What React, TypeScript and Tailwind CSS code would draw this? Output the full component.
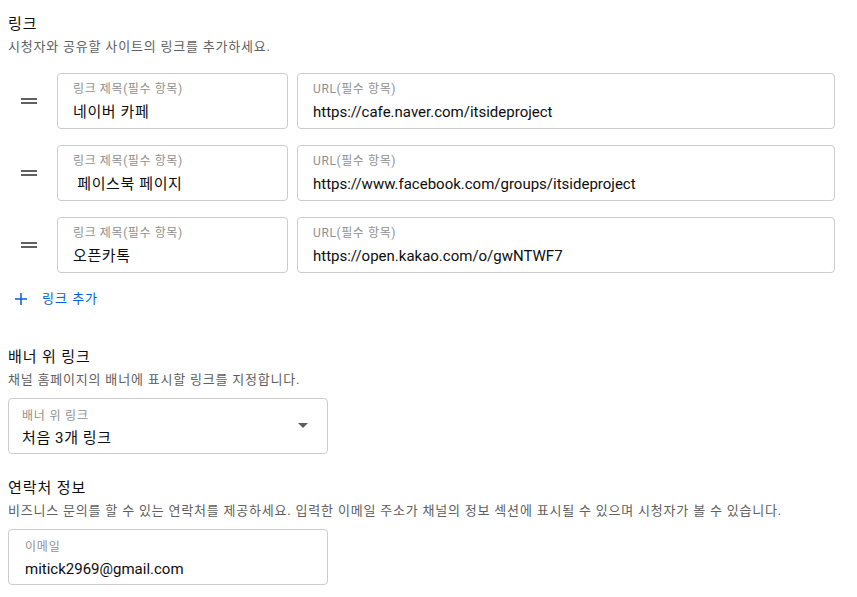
import React from 'react';

const FONT = "font-['Roboto','Noto_Sans_CJK_KR',sans-serif]";

const links = [
  { title: '네이버 카페', url: 'https://cafe.naver.com/itsideproject' },
  { title: ' 페이스북 페이지', url: 'https://www.facebook.com/groups/itsideproject' },
  { title: '오픈카톡', url: 'https://open.kakao.com/o/gwNTWF7' },
];

const DragHandle = () => (
  <svg width="24" height="24" viewBox="0 0 24 24" className="text-[#606060]">
    <path d="M20 9H4v2h16V9zM4 15h16v-2H4v2z" fill="currentColor" />
  </svg>
);

interface FieldProps {
  label: string;
  value: string;
  korean?: boolean;
  className?: string;
}

const Field: React.FC<FieldProps> = ({ label, value, korean, className = '' }) => (
  <div className={`h-[56px] rounded-[4px] border border-[#cccccc] bg-white px-[15px] pt-[7px] ${className}`}>
    <div className="text-[12px] leading-4 tracking-[0.6px] text-[#909090] whitespace-pre">{label}</div>
    <div
      className={`mt-[3px] text-[15px] leading-6 text-[#0d0d0d] whitespace-pre ${korean ? 'tracking-[0.6px]' : ''}`}
    >
      {value}
    </div>
  </div>
);

const SectionHeader = ({ title, desc }: { title: string; desc: string }) => (
  <div>
    <h2 className="text-[15px] leading-6 tracking-[0.9px] text-[#0d0d0d]">{title}</h2>
    <p className="mt-[1px] text-[13px] leading-5 tracking-[0.8px] text-[#606060]">{desc}</p>
  </div>
);

export default function App() {
  return (
    <div className={`${FONT} min-h-[597px] w-[857px] bg-white pl-[8px] pr-[22px] pt-[12px]`}>
      <SectionHeader title="링크" desc="시청자와 공유할 사이트의 링크를 추가하세요." />

      <div className="mt-[16px] flex flex-col gap-[16px]">
        {links.map((l) => (
          <div key={l.url} className="flex items-center">
            <div className="flex w-[49px] justify-center pr-[8px]">
              <DragHandle />
            </div>
            <Field label="링크 제목(필수 항목)" value={l.title} korean className="w-[231px]" />
            <Field label="URL(필수 항목)" value={l.url} className="ml-[9px] flex-1" />
          </div>
        ))}
      </div>

      <button className="mt-[16px] flex items-center gap-[12px] pl-[4px] text-[#065fd4]">
        <svg width="18" height="18" viewBox="0 0 24 24">
          <path d="M20 13h-7v7h-2v-7H4v-2h7V4h2v7h7v2z" fill="currentColor" />
        </svg>
        <span className="text-[13px] leading-5 tracking-[1px]">링크 추가</span>
      </button>

      <div className="mt-[36px]">
        <SectionHeader title="배너 위 링크" desc="채널 홈페이지의 배너에 표시할 링크를 지정합니다." />
      </div>
      <div className="relative mt-[8px] h-[56px] w-[320px] rounded-[4px] border border-[#cccccc] px-[13px] pt-[9px]">
        <div className="text-[12px] leading-4 tracking-[0.8px] text-[#909090]">배너 위 링크</div>
        <div className="mt-[2px] text-[15px] leading-6 tracking-[0.6px] text-[#0d0d0d]">처음 3개 링크</div>
        <div className="absolute right-[19px] top-[24px] h-0 w-0 border-x-[5px] border-t-[5px] border-x-transparent border-t-[#606060]" />
      </div>

      <div className="mt-[22px]">
        <SectionHeader
          title="연락처 정보"
          desc="비즈니스 문의를 할 수 있는 연락처를 제공하세요. 입력한 이메일 주소가 채널의 정보 섹션에 표시될 수 있으며 시청자가 볼 수 있습니다."
        />
      </div>
      <div className="mt-[8px] h-[56px] w-[320px] rounded-[4px] border border-[#cccccc] px-[16px] pt-[9px]">
        <div className="text-[12px] leading-4 tracking-[0.8px] text-[#909090]">이메일</div>
        <div className="mt-[2px] text-[15px] leading-6 text-[#0d0d0d]">mitick2969@gmail.com</div>
      </div>
    </div>
  );
}
